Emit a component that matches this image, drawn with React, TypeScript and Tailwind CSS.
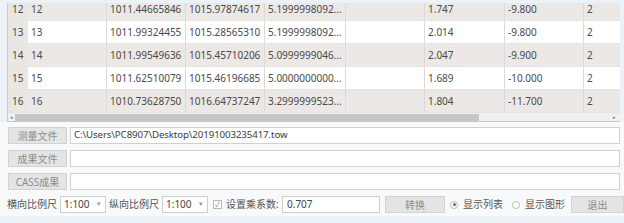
import React from 'react';

type Row = { id: string; x: string; y: string; z: string; a: string; b: string; c: string };

const rows: Row[] = [
  { id: '12', x: '1011.44665846', y: '1015.97874617', z: '5.1999998092...', a: '1.747', b: '-9.800', c: '2' },
  { id: '13', x: '1011.99324455', y: '1015.28565310', z: '5.1999998092...', a: '2.014', b: '-9.800', c: '2' },
  { id: '14', x: '1011.99549636', y: '1015.45710206', z: '5.0999999046...', a: '2.047', b: '-9.900', c: '2' },
  { id: '15', x: '1011.62510079', y: '1015.46196685', z: '5.0000000000...', a: '1.689', b: '-10.000', c: '2' },
  { id: '16', x: '1010.73628750', y: '1016.64737247', z: '3.2999999523...', a: '1.804', b: '-11.700', c: '2' },
];

const cell = 'flex items-center border-r border-[#dcdad8] pl-[3px] whitespace-nowrap overflow-hidden';
const font = { fontFamily: '"Noto Sans", "Noto Sans CJK SC", sans-serif' };

function Btn({ label, w }: { label: string; w: string }) {
  return (
    <button type="button" className={`${w} h-[17px] shrink-0 whitespace-nowrap border border-[#d2d2d2] bg-[#e4e4e4] text-[10px] leading-none text-[#8c8c8c]`}>
      {label}
    </button>
  );
}

function Select() {
  return (
    <div className="flex h-[17px] w-[46px] shrink-0 items-center justify-between border border-[#cfcfcf] bg-white pl-[3px] pr-[4px] text-[10px] text-[#444]">
      <span>1:100</span>
      <span className="text-[7px] text-[#999]">▾</span>
    </div>
  );
}

export default function App() {
  return (
    <div className="h-[223px] w-[624px] overflow-hidden bg-[#edf2f8] text-[10px]" style={font}>
      <div className="ml-[7px] mr-[4px] mt-[3px] h-[119px] overflow-hidden border-b border-l border-[#c9c9c9] bg-white">
        <div className="-mt-[5px]">
          {rows.map((r, i) => (
            <div
              key={r.id}
              className={`grid h-[23px] grid-cols-[20px_79px_79px_79px_81px_79px_80px_79px_35px] border-b border-[#e6e4e2] text-[#4a4a4a] ${i % 2 === 0 ? 'bg-[#ebe8e5]' : 'bg-white'}`}
            >
              <div className="flex items-center bg-[#e9e6e3] pl-[4px]">{r.id}</div>
              <div className={cell}>{r.id}</div>
              <div className={cell}>{r.x}</div>
              <div className={cell}>{r.y}</div>
              <div className={cell}>{r.z}</div>
              <div className={cell}></div>
              <div className={cell}>{r.a}</div>
              <div className={cell}>{r.b}</div>
              <div className="flex items-center pl-[3px]">{r.c}</div>
            </div>
          ))}
          <div className="flex h-[9px] items-center bg-[#f0f0f0]">
            <span className="w-[6px] text-center text-[5px] text-[#777]">◂</span>
            <div className="ml-[1px] h-[7px] w-[464px] bg-[#c6c6c6]" />
            <div className="flex-1" />
            <span className="mr-[4px] text-[5px] text-[#777]">▸</span>
          </div>
        </div>
      </div>

      <div className="flex h-[94px] flex-col gap-[6px] bg-[#f8f9fa] pl-[8px] pr-[4px] pt-[5px]">
        <div className="flex h-[17px] gap-[3px]">
          <Btn label="测量文件" w="w-[59px]" />
          <div className="flex flex-1 items-center border border-[#d0d0d0] bg-white pl-[3px] text-[9.7px] tracking-[-0.1px] text-[#3c3c3c]">
            C:\Users\PC8907\Desktop\20191003235417.tow
          </div>
        </div>
        <div className="flex h-[17px] gap-[3px]">
          <Btn label="成果文件" w="w-[59px]" />
          <div className="flex-1 border border-[#d0d0d0] bg-white" />
        </div>
        <div className="flex h-[17px] gap-[3px]">
          <Btn label="CASS成果" w="w-[59px]" />
          <div className="flex-1 border border-[#d0d0d0] bg-white" />
        </div>
        <div className="-ml-[1px] flex h-[17px] items-center whitespace-nowrap text-[10px] text-[#555]">
          <span className="w-[53px] shrink-0">横向比例尺</span>
          <Select />
          <span className="ml-[3px] w-[53px] shrink-0">纵向比例尺</span>
          <Select />
          <span className="ml-[5px] flex h-[9px] w-[9px] shrink-0 items-center justify-center border border-[#b8b8b8] bg-white text-[7px] leading-none text-[#888]">✓</span>
          <span className="ml-[4px] w-[56px] shrink-0">设置乘系数:</span>
          <div className="flex h-[17px] w-[98px] shrink-0 items-center border border-[#cfcfcf] bg-white pl-[4px] text-[#444]">0.707</div>
          <div className="ml-[5px] shrink-0">
            <Btn label="转换" w="w-[60px]" />
          </div>
          <span className="ml-[5px] flex h-[8px] w-[8px] shrink-0 items-center justify-center rounded-full border border-[#bbb] bg-white">
            <span className="h-[3px] w-[3px] rounded-full bg-[#666]" />
          </span>
          <span className="ml-[5px] w-[38px] shrink-0">显示列表</span>
          <span className="ml-[11px] h-[8px] w-[8px] shrink-0 rounded-full border border-[#bbb] bg-white" />
          <span className="ml-[5px] w-[40px] shrink-0">显示图形</span>
          <div className="ml-[6px] shrink-0">
            <Btn label="退出" w="w-[53px]" />
          </div>
        </div>
      </div>
    </div>
  );
}
